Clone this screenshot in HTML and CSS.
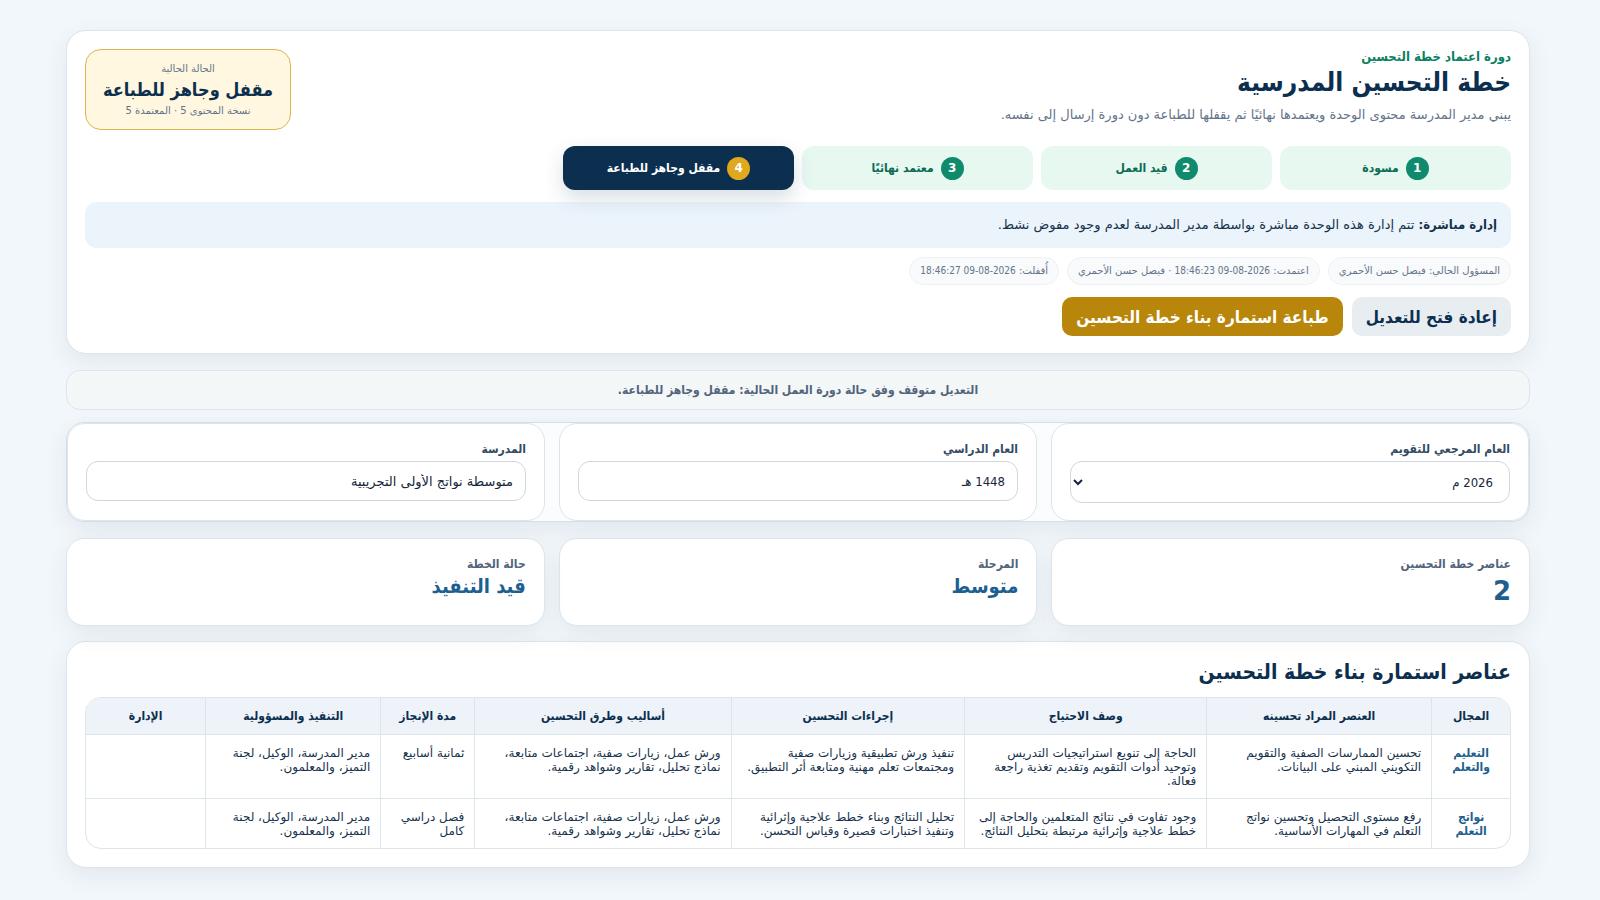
FILE: index.html
```
<!DOCTYPE html>
<html lang="ar" dir="rtl">
<head>
  <meta charset="utf-8">
  <meta name="viewport" content="width=device-width, initial-scale=1">
  <title>خطة التحسين المدرسية</title>
  <link rel="stylesheet" href="styles.css">
</head>
<body>
  <main class="page">

    <section class="card workflow">
      <div class="workflow-head">
        <div>
          <div class="eyebrow">دورة اعتماد خطة التحسين</div>
          <h1>خطة التحسين المدرسية</h1>
          <p class="lead">يبني مدير المدرسة محتوى الوحدة ويعتمدها نهائيًا ثم يقفلها للطباعة دون دورة إرسال إلى نفسه.</p>
        </div>
        <div class="state">
          <small>الحالة الحالية</small>
          <strong>مقفل وجاهز للطباعة</strong>
          <small>نسخة المحتوى 5 · المعتمدة 5</small>
        </div>
      </div>

      <ol class="steps">
        <li class="step"><b>1</b><span>مسودة</span></li>
        <li class="step"><b>2</b><span>قيد العمل</span></li>
        <li class="step"><b>3</b><span>معتمد نهائيًا</span></li>
        <li class="step current"><b>4</b><span>مقفل وجاهز للطباعة</span></li>
      </ol>

      <div class="note"><strong>إدارة مباشرة:</strong> تتم إدارة هذه الوحدة مباشرة بواسطة مدير المدرسة لعدم وجود مفوض نشط.</div>

      <div class="chips">
        <span class="chip">المسؤول الحالي: فيصل حسن الأحمري</span>
        <span class="chip">اعتمدت: <bdi dir="ltr">18:46:23 09-08-2026</bdi> · فيصل حسن الأحمري</span>
        <span class="chip">أُقفلت: <bdi dir="ltr">18:46:27 09-08-2026</bdi></span>
      </div>

      <div class="actions">
        <button type="button" class="btn btn-light">إعادة فتح للتعديل</button>
        <button type="button" class="btn btn-gold">طباعة استمارة بناء خطة التحسين</button>
      </div>
    </section>

    <div class="locked">التعديل متوقف وفق حالة دورة العمل الحالية: مقفل وجاهز للطباعة.</div>

    <form class="filters">
      <div class="field">
        <label for="year">العام المرجعي للتقويم</label>
        <select id="year"><option>2026 م</option></select>
      </div>
      <div class="field">
        <label for="hijri">العام الدراسي</label>
        <input type="text" id="hijri" value="1448 هـ" readonly>
      </div>
      <div class="field">
        <label for="school">المدرسة</label>
        <input type="text" id="school" class="wide" value="متوسطة نواتج الأولى التجريبية" readonly>
      </div>
    </form>

    <section class="stats">
      <div class="stat"><span>عناصر خطة التحسين</span><strong class="num">2</strong></div>
      <div class="stat"><span>المرحلة</span><strong>متوسط</strong></div>
      <div class="stat"><span>حالة الخطة</span><strong>قيد التنفيذ</strong></div>
    </section>

    <section class="card plan">
      <h2>عناصر استمارة بناء خطة التحسين</h2>
      <div class="table-wrap">
        <table>
          <colgroup>
            <col class="c-domain"><col class="c-item"><col class="c-need"><col class="c-steps">
            <col class="c-methods"><col class="c-time"><col class="c-owner"><col class="c-admin">
          </colgroup>
          <thead>
            <tr>
              <th>المجال</th>
              <th>العنصر المراد تحسينه</th>
              <th>وصف الاحتياج</th>
              <th>إجراءات التحسين</th>
              <th>أساليب وطرق التحسين</th>
              <th>مدة الإنجاز</th>
              <th>التنفيذ والمسؤولية</th>
              <th>الإدارة</th>
            </tr>
          </thead>
          <tbody>
            <tr>
              <td class="domain">التعليم<br>والتعلم</td>
              <td>تحسين الممارسات الصفية والتقويم<br>التكويني المبني على البيانات.</td>
              <td>الحاجة إلى تنويع استراتيجيات التدريس<br>وتوحيد أدوات التقويم وتقديم تغذية راجعة<br>فعالة.</td>
              <td>تنفيذ ورش تطبيقية وزيارات صفية<br>ومجتمعات تعلم مهنية ومتابعة أثر التطبيق.</td>
              <td>ورش عمل، زيارات صفية، اجتماعات متابعة،<br>نماذج تحليل، تقارير وشواهد رقمية.</td>
              <td>ثمانية أسابيع</td>
              <td>مدير المدرسة، الوكيل، لجنة<br>التميز، والمعلمون.</td>
              <td></td>
            </tr>
            <tr>
              <td class="domain">نواتج<br>التعلم</td>
              <td>رفع مستوى التحصيل وتحسين نواتج<br>التعلم في المهارات الأساسية.</td>
              <td>وجود تفاوت في نتائج المتعلمين والحاجة إلى<br>خطط علاجية وإثرائية مرتبطة بتحليل النتائج.</td>
              <td>تحليل النتائج وبناء خطط علاجية وإثرائية<br>وتنفيذ اختبارات قصيرة وقياس التحسن.</td>
              <td>ورش عمل، زيارات صفية، اجتماعات متابعة،<br>نماذج تحليل، تقارير وشواهد رقمية.</td>
              <td>فصل دراسي<br>كامل</td>
              <td>مدير المدرسة، الوكيل، لجنة<br>التميز، والمعلمون.</td>
              <td></td>
            </tr>
          </tbody>
        </table>
      </div>
    </section>

  </main>
</body>
</html>
```
FILE: styles.css
```
* {
  box-sizing: border-box;
}

body {
  margin: 0;
  background: #f2f7fb;
  color: #17324d;
  font-family: "DejaVu Sans Condensed", "DejaVu Sans", sans-serif;
  font-size: 13px;
}

.page {
  padding: 30px 70px 32px 66px;
}

.card {
  background: #fff;
  border: 1px solid #dce5ea;
  border-radius: 20px;
  padding: 18px 18px 17px;
  box-shadow: 0 8px 24px rgba(20, 50, 65, 0.08);
}

/* workflow */
.workflow-head {
  display: flex;
  justify-content: space-between;
  align-items: flex-start;
}

.eyebrow {
  color: #0b8062;
  font-weight: bold;
  font-size: 13px;
  line-height: 16px;
}

h1 {
  margin: 0;
  color: #0d2f4f;
  font-size: 26px;
  line-height: 34px;
}

.lead {
  margin: 7px 0 0;
  color: #64748b;
  font-family: "DejaVu Sans", sans-serif;
  font-size: 13px;
  line-height: 18px;
}

.state {
  display: flex;
  flex-direction: column;
  align-items: center;
  justify-content: center;
  min-width: 206px;
  height: 81px;
  padding: 0 15px;
  background: #fff7df;
  border: 1px solid #d9b650;
  border-radius: 16px;
}

.state small {
  color: #64748b;
  font-family: "DejaVu Sans", sans-serif;
  font-size: 10px;
  line-height: 16px;
}

.state strong {
  color: #0d2f4f;
  font-size: 18px;
  line-height: 26px;
}

.steps {
  display: grid;
  grid-template-columns: repeat(6, 1fr);
  gap: 8px;
  margin: 16px 0 12px;
  padding: 0;
  list-style: none;
}

.step {
  display: flex;
  align-items: center;
  justify-content: center;
  gap: 7px;
  height: 44px;
  border-radius: 12px;
  background: #e7f8f1;
  color: #0b6b53;
  font-size: 12px;
  font-weight: bold;
}

.step b {
  display: grid;
  place-items: center;
  width: 23px;
  height: 23px;
  border-radius: 50%;
  background: #108a6c;
  color: #fff;
  font-family: "DejaVu Sans", sans-serif;
  font-size: 12px;
}

.step.current {
  background: #0d2f4f;
  color: #fff;
  box-shadow: 0 8px 20px rgba(13, 47, 79, 0.16);
}

.step.current b {
  background: #dfa81f;
}

.note {
  padding: 13px 14px;
  border-radius: 12px;
  background: #ebf4fb;
  font-family: "DejaVu Sans", sans-serif;
  font-size: 13px;
  line-height: 20px;
}

.note strong {
  font-family: "DejaVu Sans Condensed", sans-serif;
}

.chips {
  display: flex;
  flex-wrap: wrap;
  gap: 8px;
  margin: 9px 0 12px;
}

.chip {
  padding: 5px 10px;
  border: 1px solid #eef2f5;
  border-radius: 14px;
  background: #f8fafb;
  color: #64748b;
  font-family: "DejaVu Sans", sans-serif;
  font-size: 10px;
  line-height: 16px;
}

.chip bdi {
  font-family: "DejaVu Sans Condensed", sans-serif;
}

.actions {
  display: flex;
  gap: 9px;
}

.btn {
  height: 39px;
  padding: 0 14px;
  border: 0;
  border-radius: 10px;
  font-family: inherit;
  font-size: 17px;
  font-weight: bold;
  cursor: pointer;
}

.btn-light {
  background: #e8edf2;
  color: #0d2f4f;
}

.btn-gold {
  background: #b8860b;
  color: #fff;
}

.locked {
  margin: 16px 0 12px;
  padding: 10px;
  border: 1px solid #dce5ea;
  border-radius: 14px;
  background: #f4f7f8;
  color: #52647a;
  font-size: 12px;
  font-weight: bold;
  line-height: 18px;
  text-align: center;
}

/* filters */
.filters {
  display: grid;
  grid-template-columns: repeat(3, 1fr);
  gap: 14px;
  border: 1px solid #d3e0e6;
  border-radius: 18px;
  background: #fbfcfe;
  box-shadow: 0 8px 24px rgba(20, 50, 65, 0.08);
}

.field {
  height: 98px;
  padding: 17px 18px;
  border: 1px solid #dce5ea;
  border-radius: 18px;
  background: #fff;
}

.field label {
  display: block;
  margin-bottom: 4px;
  color: #334b63;
  font-size: 12px;
  font-weight: bold;
  line-height: 16px;
}

.field input,
.field select {
  display: block;
  width: 100%;
  height: 40px;
  padding: 0 12px;
  border: 1px solid #cfd8df;
  border-radius: 12px;
  background: #fff;
  color: #14263b;
  font-family: inherit;
  font-size: 13px;
}

.field .wide {
  font-family: "DejaVu Sans", sans-serif;
}

.field select {
  height: 42px;
}

/* stats */
.stats {
  display: grid;
  grid-template-columns: repeat(3, 1fr);
  gap: 14px;
  margin: 16px 0 15px;
}

.stat {
  height: 88px;
  padding: 17px 18px;
  border: 1px solid #dce5ea;
  border-radius: 18px;
  background: #fff;
  box-shadow: 0 8px 24px rgba(20, 50, 65, 0.07);
}

.stat span {
  display: block;
  color: #52647a;
  font-size: 12px;
  font-weight: bold;
  line-height: 16px;
}

.stat strong {
  display: block;
  color: #1d5f8f;
  font-size: 20px;
  line-height: 28px;
}

.stat .num {
  font-family: "DejaVu Sans", sans-serif;
  font-size: 26px;
  line-height: 38px;
}

/* plan table */
h2 {
  margin: 0 0 13px;
  color: #0d2f4f;
  font-size: 21px;
  line-height: 24px;
}

.table-wrap {
  overflow: hidden;
  border: 1px solid #dce5ea;
  border-radius: 16px;
}

table {
  width: 100%;
  table-layout: fixed;
  border-collapse: collapse;
}

.c-domain { width: 5.5%; }
.c-item { width: 15.8%; }
.c-need { width: 17%; }
.c-steps { width: 16.4%; }
.c-methods { width: 18%; }
.c-time { width: 6.6%; }
.c-owner { width: 12.3%; }
.c-admin { width: 8.4%; }

th,
td {
  padding: 11px 10px 10px;
  border: 1px solid #dce5ea;
  font-size: 12px;
  line-height: 14px;
  text-align: right;
  vertical-align: top;
}

td {
  font-family: "DejaVu Sans", sans-serif;
}

th {
  padding-bottom: 11px;
  background: #edf3f8;
  color: #0d2f4f;
  text-align: center;
}

tr > :first-child { border-right: 0; }
tr > :last-child { border-left: 0; }
thead th { border-top: 0; }
tbody tr:last-child td { border-bottom: 0; }

.plan {
  padding-bottom: 18px;
}

.domain {
  color: #1d5f8f;
  font-family: "DejaVu Sans Condensed", sans-serif;
  font-weight: bold;
  text-align: center;
}
```
